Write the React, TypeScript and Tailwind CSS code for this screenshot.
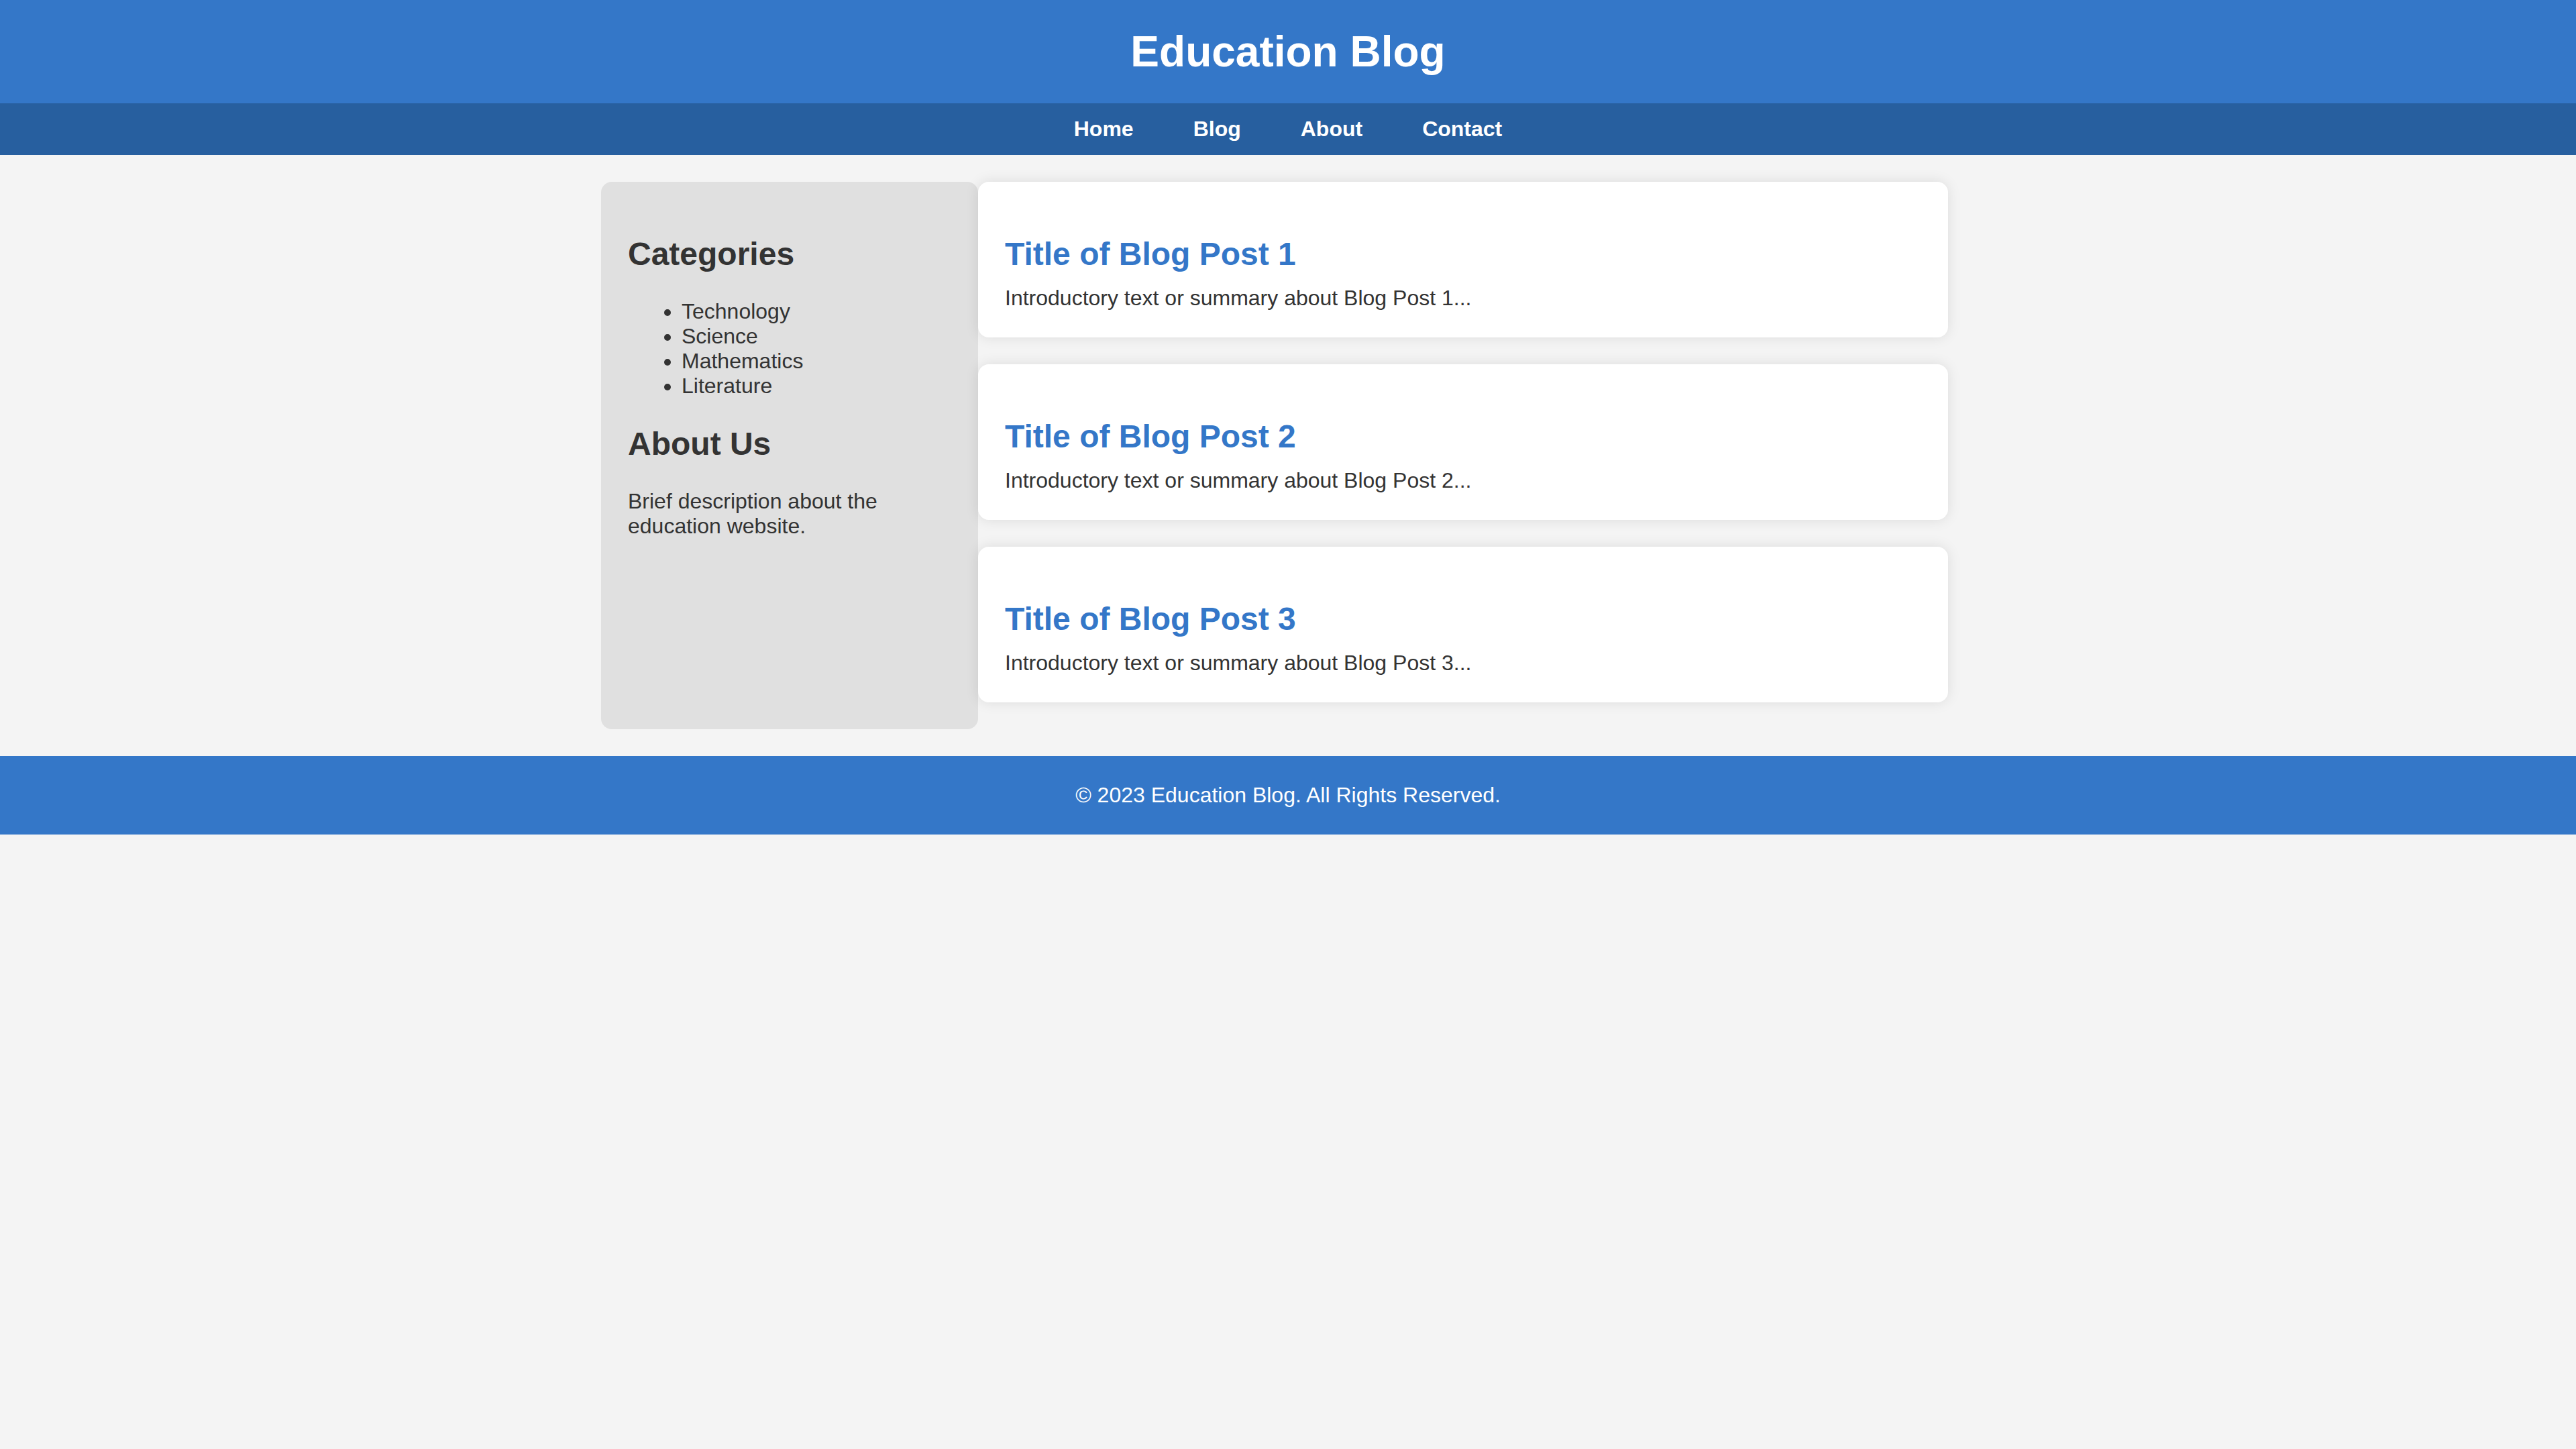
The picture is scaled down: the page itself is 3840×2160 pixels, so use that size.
const posts = [
  { id: 1, title: "Title of Blog Post 1", summary: "Introductory text or summary about Blog Post 1..." },
  { id: 2, title: "Title of Blog Post 2", summary: "Introductory text or summary about Blog Post 2..." },
  { id: 3, title: "Title of Blog Post 3", summary: "Introductory text or summary about Blog Post 3..." },
];

const categories = ["Technology", "Science", "Mathematics", "Literature"];

const navLinks = ["Home", "Blog", "About", "Contact"];

export default function App() {
  return (
    <div className="min-h-screen bg-[#f4f4f4] font-['Liberation_Sans',Arial,sans-serif] leading-[normal] text-[#333]">
      {/* Header */}
      <header className="bg-[#3477c8] py-[40px] text-center">
        <h1 className="text-[64px] font-bold leading-[normal] text-white">Education Blog</h1>
      </header>

      {/* Nav */}
      <nav className="flex justify-center gap-[89px] bg-[#275f9f] py-[20px]">
        {navLinks.map((link) => (
          <a key={link} href="#" className="text-[32px] font-bold leading-[normal] text-white">
            {link}
          </a>
        ))}
      </nav>

      {/* Content */}
      <div className="mx-auto mt-[40px] flex w-[2048px]">
        <aside className="w-[562px] shrink-0 rounded-[16px] bg-[#e0e0e0] p-[40px]">
          <h2 className="mt-[40px] mb-[40px] text-[48px] font-bold leading-[normal] text-[#333]">Categories</h2>
          <ul className="list-disc pl-[80px] text-[32px] leading-[normal]">
            {categories.map((c) => (
              <li key={c}>{c}</li>
            ))}
          </ul>
          <h2 className="mt-[40px] mb-[40px] text-[48px] font-bold leading-[normal] text-[#333]">About Us</h2>
          <p className="text-[32px] leading-[normal]">Brief description about the education website.</p>
        </aside>

        <main className="flex-1 pr-[40px]">
          {posts.map((post) => (
            <article
              key={post.id}
              className="mb-[40px] rounded-[16px] bg-white p-[40px] shadow-[0_0_20px_rgba(0,0,0,0.1)]"
            >
              <h2 className="mt-[40px] mb-[20px] text-[48px] font-bold leading-[normal] text-[#3477c8]">
                {post.title}
              </h2>
              <p className="text-[32px] leading-[normal]">{post.summary}</p>
            </article>
          ))}
        </main>
      </div>

      {/* Footer */}
      <footer className="mt-[40px] bg-[#3477c8] py-[40px] text-center">
        <p className="text-[32px] leading-[normal] text-white">© 2023 Education Blog. All Rights Reserved.</p>
      </footer>
    </div>
  );
}
